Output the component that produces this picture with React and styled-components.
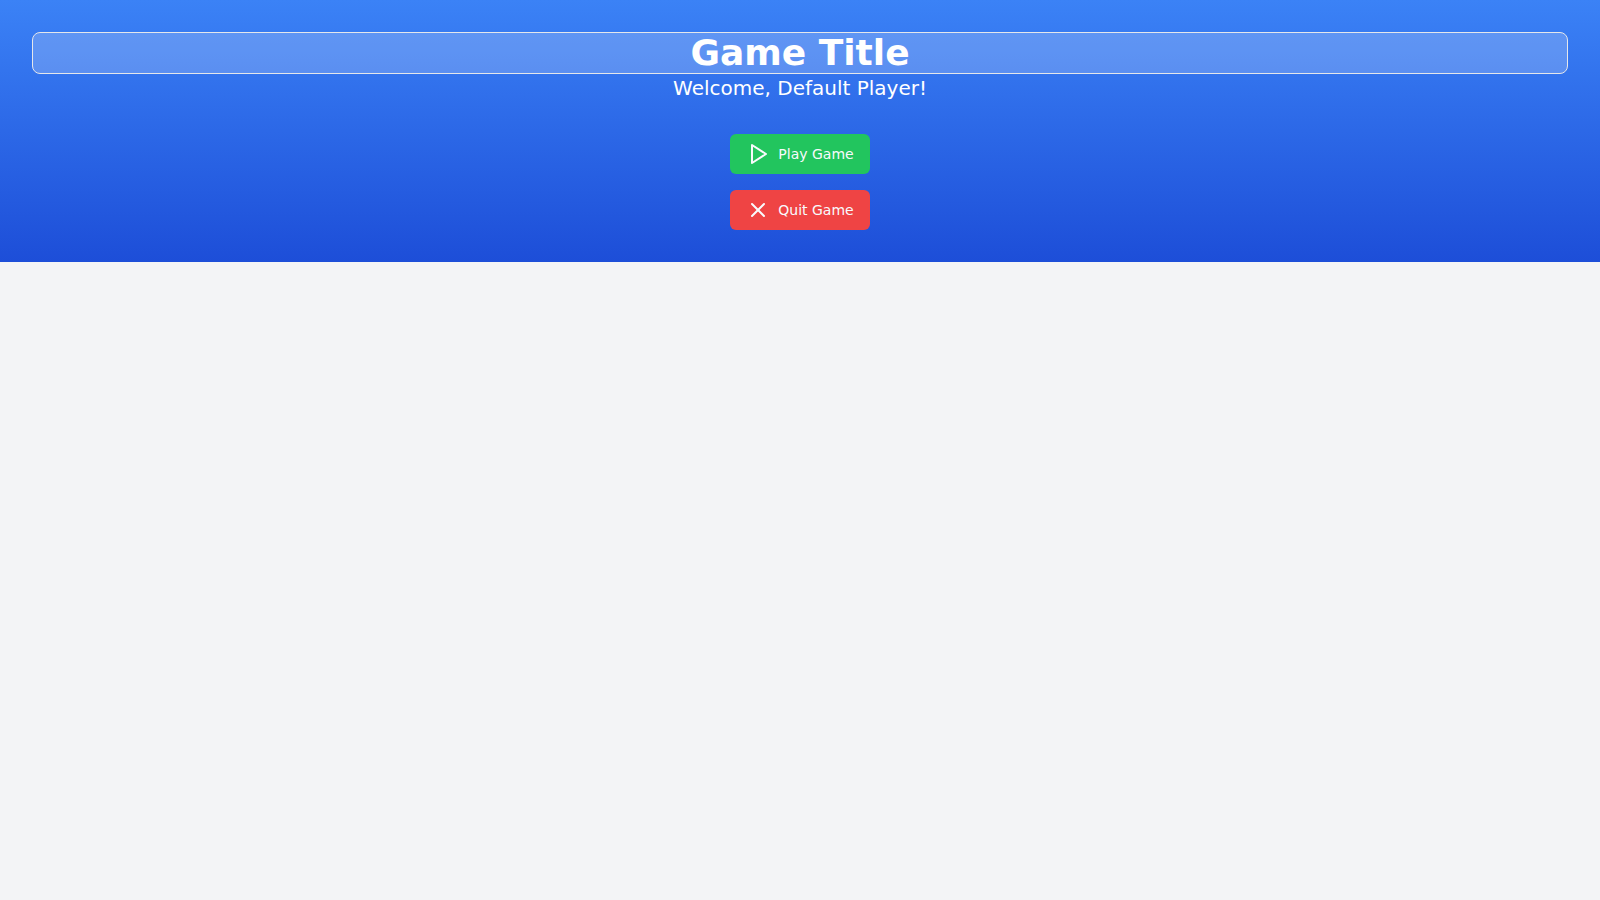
import React from "react";
import styled, { createGlobalStyle } from "styled-components";
import { X } from "lucide-react";

const GlobalStyle = createGlobalStyle`
  *, *::before, *::after {
    box-sizing: border-box;
  }
  body {
    margin: 0;
    background: #f3f4f6;
    font-family: "DejaVu Sans", sans-serif;
  }
`;

const Hero = styled.main`
  display: flex;
  flex-direction: column;
  align-items: center;
  padding: 32px;
  color: #ffffff;
  background: linear-gradient(to bottom, #3b82f6, #1d4ed8);
`;

const Title = styled.h1`
  width: 100%;
  margin: 0;
  border: 1px solid #e5e7eb;
  border-radius: 8px;
  background: rgba(255, 255, 255, 0.2);
  font-size: 36px;
  line-height: 40px;
  font-weight: 700;
  text-align: center;
`;

const Welcome = styled.p`
  margin: 0 0 32px;
  font-size: 20px;
  line-height: 28px;
  text-align: center;
`;

const Actions = styled.div`
  display: flex;
  flex-direction: column;
  gap: 16px;
`;

const ActionButton = styled.button`
  display: flex;
  align-items: center;
  justify-content: center;
  gap: 8px;
  height: 40px;
  padding: 8px 16px;
  border: 0;
  border-radius: 6px;
  background: ${({ $tone }) => ($tone === "danger" ? "#ef4444" : "#22c55e")};
  color: #f8fafc;
  font-family: inherit;
  font-size: 14px;
  line-height: 20px;
  font-weight: 500;
  cursor: pointer;
`;

function PlayIcon() {
  return (
    <svg
      width="24"
      height="24"
      viewBox="0 0 24 24"
      fill="none"
      stroke="currentColor"
      strokeWidth="2"
      strokeLinecap="round"
      strokeLinejoin="round"
      aria-hidden="true"
    >
      <polygon points="6 3 20 12 6 21 6 3" />
    </svg>
  );
}

export default function App() {
  return (
    <>
      <GlobalStyle />
      <Hero>
        <Title>Game Title</Title>
        <Welcome>Welcome, Default Player!</Welcome>
        <Actions>
          <ActionButton type="button" $tone="success">
            <PlayIcon />
            Play Game
          </ActionButton>
          <ActionButton type="button" $tone="danger">
            <X size={24} aria-hidden="true" />
            Quit Game
          </ActionButton>
        </Actions>
      </Hero>
    </>
  );
}
